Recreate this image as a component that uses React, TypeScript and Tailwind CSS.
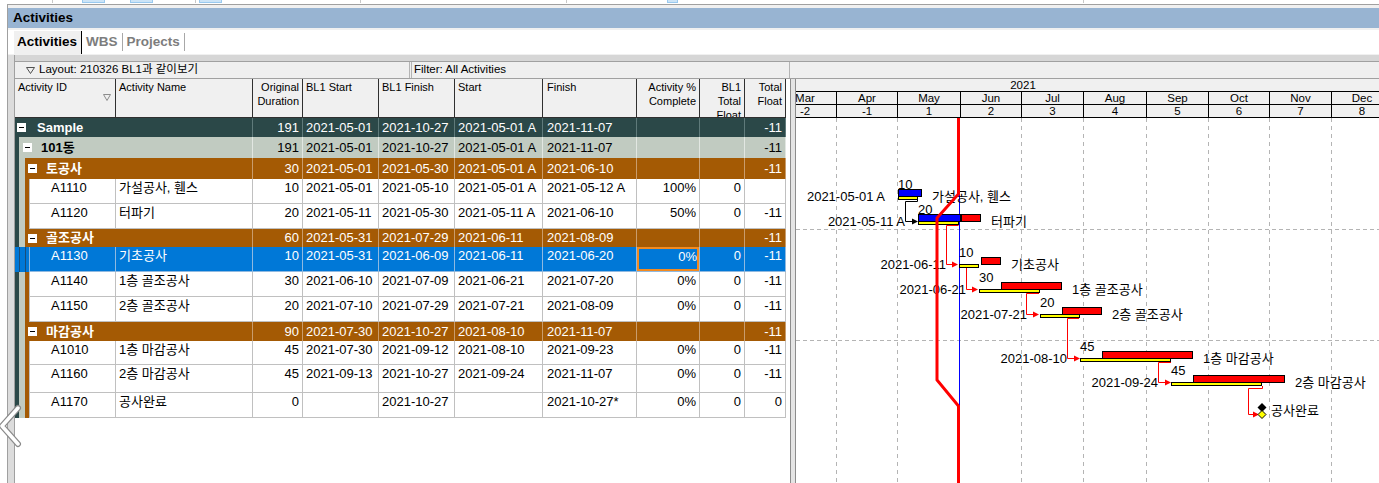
import React from 'react'

type Kind = 'l0' | 'l1' | 'l2' | 'act'

type Row = {
  kind: Kind
  id?: string
  name: string
  dur: string
  bs: string
  bf: string
  st: string
  fi: string
  pct?: string
  btf?: string
  tf: string
  h: string
  sel?: boolean
}

const ROWS: Row[] = [
  { kind: 'l0', name: 'Sample', dur: '191', bs: '2021-05-01', bf: '2021-10-27', st: '2021-05-01 A', fi: '2021-11-07', tf: '-11', h: 'h-[19px]' },
  { kind: 'l1', name: '101동', dur: '191', bs: '2021-05-01', bf: '2021-10-27', st: '2021-05-01 A', fi: '2021-11-07', tf: '-11', h: 'h-[21px]' },
  { kind: 'l2', name: '토공사', dur: '30', bs: '2021-05-01', bf: '2021-05-30', st: '2021-05-01 A', fi: '2021-06-10', tf: '-11', h: 'h-[21px]' },
  { kind: 'act', id: 'A1110', name: '가설공사, 휀스', dur: '10', bs: '2021-05-01', bf: '2021-05-10', st: '2021-05-01 A', fi: '2021-05-12 A', pct: '100%', btf: '0', tf: '', h: 'h-[25px]' },
  { kind: 'act', id: 'A1120', name: '터파기', dur: '20', bs: '2021-05-11', bf: '2021-05-30', st: '2021-05-11 A', fi: '2021-06-10', pct: '50%', btf: '0', tf: '-11', h: 'h-[25px]' },
  { kind: 'l2', name: '골조공사', dur: '60', bs: '2021-05-31', bf: '2021-07-29', st: '2021-06-11', fi: '2021-08-09', tf: '-11', h: 'h-[18px]' },
  { kind: 'act', id: 'A1130', name: '기초공사', dur: '10', bs: '2021-05-31', bf: '2021-06-09', st: '2021-06-11', fi: '2021-06-20', pct: '0%', btf: '0', tf: '-11', h: 'h-[25px]', sel: true },
  { kind: 'act', id: 'A1140', name: '1층 골조공사', dur: '30', bs: '2021-06-10', bf: '2021-07-09', st: '2021-06-21', fi: '2021-07-20', pct: '0%', btf: '0', tf: '-11', h: 'h-[25px]' },
  { kind: 'act', id: 'A1150', name: '2층 골조공사', dur: '20', bs: '2021-07-10', bf: '2021-07-29', st: '2021-07-21', fi: '2021-08-09', pct: '0%', btf: '0', tf: '-11', h: 'h-[25px]' },
  { kind: 'l2', name: '마감공사', dur: '90', bs: '2021-07-30', bf: '2021-10-27', st: '2021-08-10', fi: '2021-11-07', tf: '-11', h: 'h-[19px]' },
  { kind: 'act', id: 'A1010', name: '1층 마감공사', dur: '45', bs: '2021-07-30', bf: '2021-09-12', st: '2021-08-10', fi: '2021-09-23', pct: '0%', btf: '0', tf: '-11', h: 'h-[24px]' },
  { kind: 'act', id: 'A1160', name: '2층 마감공사', dur: '45', bs: '2021-09-13', bf: '2021-10-27', st: '2021-09-24', fi: '2021-11-07', pct: '0%', btf: '0', tf: '-11', h: 'h-[28px]' },
  { kind: 'act', id: 'A1170', name: '공사완료', dur: '0', bs: '', bf: '2021-10-27', st: '', fi: '2021-10-27*', pct: '0%', btf: '0', tf: '0', h: 'h-[25px]' },
]

const COLS: { key: 'dur' | 'bs' | 'bf' | 'st' | 'fi' | 'pct' | 'btf' | 'tf'; w: string; align: string }[] = [
  { key: 'dur', w: 'w-[50px]', align: 'justify-end pr-[3px]' },
  { key: 'bs', w: 'w-[76px]', align: 'pl-[3px]' },
  { key: 'bf', w: 'w-[76px]', align: 'pl-[3px]' },
  { key: 'st', w: 'w-[88px]', align: 'pl-[3px]' },
  { key: 'fi', w: 'w-[94px]', align: 'pl-[4px]' },
  { key: 'pct', w: 'w-[63px]', align: 'justify-end pr-[3px]' },
  { key: 'btf', w: 'w-[45px]', align: 'justify-end pr-[3px]' },
  { key: 'tf', w: 'w-[41px]', align: 'justify-end pr-[3px]' },
]

const STRIPS: Record<Kind, string[]> = {
  l0: [],
  l1: ['w-[4px] bg-[#2b4848]'],
  l2: ['w-[4px] bg-[#2b4848]', 'w-[6px] bg-[#c1cbc1]'],
  act: ['w-[4px] bg-[#2b4848]', 'w-[6px] bg-[#c1cbc1]', 'w-[4px] bg-[#a45a04]'],
}

const SEL_STRIPS = ['w-[4px] bg-[#0078d7]', 'w-[6px] bg-[#0078d7] border-l border-[#1b4d78]', 'w-[4px] bg-[#0078d7] border-l border-[#1b4d78]']

const GROUP = {
  l0: { tone: 'bg-[#2b4848] text-white', line: 'border-[#5f7a7a]', first: 'w-[238px]', box: 'ml-[2px]', name: 'ml-[11px]' },
  l1: { tone: 'bg-[#c1cbc1] text-black', line: 'border-[#e2e7e2]', first: 'w-[234px]', box: 'ml-[4px]', name: 'ml-[9px]' },
  l2: { tone: 'bg-[#a45a04] text-white', line: 'border-[#c99c6c]', first: 'w-[228px]', box: 'ml-[3px]', name: 'ml-[9px]' },
}

function MinusBox({ cls }: { cls: string }) {
  return (
    <span className={`${cls} w-[9px] h-[9px] bg-white flex items-center justify-center shrink-0`}>
      <span className="w-[5px] h-[1px] bg-black" />
    </span>
  )
}

function GroupRow({ r }: { r: Row }) {
  const g = GROUP[r.kind as 'l0' | 'l1' | 'l2']
  return (
    <div className={`flex shrink-0 ${r.h}`}>
      {STRIPS[r.kind].map((s, i) => <div key={i} className={`${s} shrink-0`} />)}
      <div className={`flex ${g.tone}`}>
        <div className={`${g.first} shrink-0 flex items-center border-r ${g.line}`}>
          <MinusBox cls={g.box} />
          <span className={`${g.name} font-bold`}>{r.name}</span>
        </div>
        {COLS.map((c) => (
          <div key={c.key} className={`${c.w} ${c.align} shrink-0 flex items-center border-r ${g.line} whitespace-nowrap`}>
            {r[c.key]}
          </div>
        ))}
      </div>
    </div>
  )
}

function ActRow({ r }: { r: Row }) {
  const sel = !!r.sel
  const tone = sel ? 'bg-[#0078d7] text-white' : 'bg-white text-black'
  const line = sel ? 'border-[#8fb9e0]' : 'border-[#c0c0c0]'
  const strips = sel ? SEL_STRIPS : STRIPS.act
  return (
    <div className={`flex shrink-0 ${r.h}`}>
      {strips.map((s, i) => <div key={i} className={`${s} shrink-0`} />)}
      <div className={`flex ${tone} leading-[16px]`}>
        <div className={`w-[87px] shrink-0 border-l border-r border-b ${line} pl-[21px] pt-[1px]`}>{r.id}</div>
        <div className={`w-[137px] shrink-0 border-r border-b ${line} pl-[3px] pt-[1px] whitespace-nowrap`}>{r.name}</div>
        {COLS.map((c) =>
          sel && c.key === 'pct' ? (
            <div key={c.key} className={`${c.w} shrink-0 border-r border-b ${line}`}>
              <div className="h-full border-2 border-[#f28a20] text-right leading-[16px]">{r.pct}</div>
            </div>
          ) : (
            <div key={c.key} className={`${c.w} ${c.align} shrink-0 flex items-start pt-[1px] border-r border-b ${line} whitespace-nowrap`}>
              {r[c.key]}
            </div>
          )
        )}
      </div>
    </div>
  )
}

function TableHeader() {
  const cell = 'shrink-0 border-r border-[#303030] pt-[1px] overflow-hidden'
  return (
    <div className="flex shrink-0 h-[39px] w-[771px] bg-[#f0f0f0] border-b border-[#303030] text-[11px] leading-[14px] text-black">
      <div className={`w-[101px] ${cell} pl-[3px] flex flex-col`}>
        <span>Activity ID</span>
        <svg className="self-end mr-[4px]" width="8" height="7" viewBox="0 0 8 7">
          <polygon points="0.5,0.5 7.5,0.5 4,6.5" fill="none" stroke="#8c8c8c" />
        </svg>
      </div>
      <div className={`w-[137px] ${cell} pl-[3px]`}>Activity Name</div>
      <div className={`w-[50px] ${cell} pr-[3px] text-right`}>Original<br />Duration</div>
      <div className={`w-[76px] ${cell} pl-[3px]`}>BL1 Start</div>
      <div className={`w-[76px] ${cell} pl-[3px]`}>BL1 Finish</div>
      <div className={`w-[88px] ${cell} pl-[3px]`}>Start</div>
      <div className={`w-[94px] ${cell} pl-[4px]`}>Finish</div>
      <div className={`w-[63px] ${cell} pr-[3px] text-right whitespace-nowrap`}>Activity %<br />Complete</div>
      <div className={`w-[45px] ${cell} pr-[3px] text-right`}>BL1<br />Total<br />Float</div>
      <div className={`w-[41px] ${cell} pr-[3px] text-right`}>Total<br />Float</div>
    </div>
  )
}

const MONTHS = [
  { m: 'Mar', n: '-2', w: 'w-[63px]' },
  { m: 'Apr', n: '-1', w: 'w-[61px]' },
  { m: 'May', n: '1', w: 'w-[63px]' },
  { m: 'Jun', n: '2', w: 'w-[61px]' },
  { m: 'Jul', n: '3', w: 'w-[62px]' },
  { m: 'Aug', n: '4', w: 'w-[63px]' },
  { m: 'Sep', n: '5', w: 'w-[62px]' },
  { m: 'Oct', n: '6', w: 'w-[61px]' },
  { m: 'Nov', n: '7', w: 'w-[62px]' },
  { m: 'Dec', n: '8', w: 'w-[61px]' },
]

function GanttHeader() {
  return (
    <div className="h-[39px] shrink-0 bg-[#f0f0f0] border-b border-black overflow-hidden text-[11.5px] leading-[12px] text-black">
      <div className="h-[13px] border-b border-black overflow-hidden">
        <div className="ml-[-142px] w-[738px] text-center">2021</div>
      </div>
      <div className="flex h-[13px] border-b border-black ml-[-22px] overflow-hidden">
        {MONTHS.map((m) => (
          <div key={m.m} className={`${m.w} shrink-0 border-r border-black text-center`}>{m.m}</div>
        ))}
      </div>
      <div className="flex h-[12px] ml-[-22px] overflow-hidden">
        {MONTHS.map((m) => (
          <div key={m.m} className={`${m.w} shrink-0 border-r border-black text-center`}>{m.n}</div>
        ))}
      </div>
    </div>
  )
}

// day 0 = 2021-04-01
const X = (d: number) => Math.round(837 + d * 2.025)

const BARS = [
  { top: 179, bs: 30, bf: 40, as: 30, af: 42, done: 42, dur: '10', start: '2021-05-01 A', name: '가설공사, 휀스' },
  { top: 204, bs: 40, bf: 60, as: 40, af: 71, done: 61, dur: '20', start: '2021-05-11 A', name: '터파기' },
  { top: 247, bs: 60, bf: 70, as: 71, af: 81, done: 0, dur: '10', start: '2021-06-11', name: '기초공사' },
  { top: 272, bs: 70, bf: 100, as: 81, af: 111, done: 0, dur: '30', start: '2021-06-21', name: '1층 골조공사' },
  { top: 297, bs: 100, bf: 120, as: 111, af: 131, done: 0, dur: '20', start: '2021-07-21', name: '2층 골조공사' },
  { top: 341, bs: 120, bf: 165, as: 131, af: 176, done: 0, dur: '45', start: '2021-08-10', name: '1층 마감공사' },
  { top: 365, bs: 165, bf: 210, as: 176, af: 221, done: 0, dur: '45', start: '2021-09-24', name: '2층 마감공사' },
]

const LINKS = [
  { d: 'M958.5 225.5 H946.5 V264.5 H952', tip: 958, y: 264.5 },
  { d: 'M966.5 268 V289.5 H972', tip: 978, y: 289.5 },
  { d: 'M1039 293.5 H1026.5 V314.5 H1033', tip: 1039, y: 314.5 },
  { d: 'M1079 318.5 H1067.5 V358.5 H1074', tip: 1080, y: 358.5 },
  { d: 'M1171 362.5 H1158.5 V382.5 H1165', tip: 1171, y: 382.5 },
  { d: 'M1262.5 386 V388.5 H1248.5 V414.5 H1253', tip: 1259, y: 414.5 },
]

const arrow = (tip: number, y: number) => `${tip},${y} ${tip - 6},${y - 3} ${tip - 6},${y + 3}`

function Gantt() {
  const font = "'Liberation Sans','Noto Sans CJK KR',sans-serif"
  return (
    <svg width={583} height={365} viewBox="796 118 583 365" className="block shrink-0 bg-white" fontFamily={font} fontSize={13}>
      {[836, 897, 1021, 1083, 1146, 1208, 1269, 1331].map((x) => (
        <line key={x} x1={x + 0.5} y1={118} x2={x + 0.5} y2={483} stroke="#b4b4b4" strokeDasharray="4 4" />
      ))}
      {[229.5, 340.5].map((y) => (
        <line key={y} x1={796} y1={y} x2={1379} y2={y} stroke="#b4b4b4" strokeDasharray="4 3" />
      ))}
      <line x1={959.5} y1={118} x2={959.5} y2={483} stroke="#0000ff" />

      {BARS.map((b) => {
        const T = b.top + 10
        const x0 = X(b.bs)
        const x1 = X(b.bf)
        const a0 = X(b.as)
        const a1 = X(b.af)
        const mid = b.done > b.as ? X(Math.min(b.done, b.af)) : a0
        return (
          <g key={b.name}>
            <rect x={x0 + 0.5} y={T + 7.5} width={x1 - x0 - 1} height={3} fill="#ffff00" stroke="#000" />
            {mid > a0 && <rect x={a0 + 0.5} y={T + 0.5} width={mid - a0 - 1} height={7} fill="#0000ff" stroke="#000" />}
            {a1 > mid && <rect x={mid + 0.5} y={T + 0.5} width={a1 - mid - 1} height={7} fill="#ff0000" stroke="#000" />}
            <text x={x0} y={T}>{b.dur}</text>
            <text x={x0 - 13} y={T + 12} textAnchor="end">{b.start}</text>
            <text x={a1 + 10} y={T + 12}>{b.name}</text>
          </g>
        )
      })}

      <path d="M917.5 199 V201.5 H905.5 V221.5 H912" fill="none" stroke="#000" />
      <polygon points={arrow(918, 221.5)} fill="#000" />
      {LINKS.map((l) => (
        <g key={l.d}>
          <path d={l.d} fill="none" stroke="#ff0000" />
          <polygon points={arrow(l.tip, l.y)} fill="#ff0000" />
        </g>
      ))}

      <polygon points="1262,403 1266.5,407.5 1262,412 1257.5,407.5" fill="#000" />
      <polygon points="1262,410.5 1266,414.5 1262,418.5 1258,414.5" fill="#ffff00" stroke="#000" />
      <text x={1271} y={415}>공사완료</text>

      <path d="M958.5 118 V194 L937 218 V380 L958.5 406 V483" fill="none" stroke="#ff0000" strokeWidth={3} />
    </svg>
  )
}

export default function App() {
  return (
    <div className="w-[1379px] h-[483px] overflow-hidden bg-white relative font-['Liberation_Sans','Noto_Sans_CJK_KR',sans-serif] text-[13px] text-black">
      {/* toolbar remnant */}
      <div className="h-[4px] flex items-start">
        <div className="ml-[52px] w-[1px] h-[3px] bg-[#c8c8c8]" />
        <div className="ml-[29px] w-[23px] h-[3px] bg-[#cce4f7] border-x border-b border-[#99c9ef]" />
        <div className="ml-[25px] w-[23px] h-[3px] bg-[#cce4f7] border-x border-b border-[#99c9ef]" />
        <div className="ml-[42px] w-[1px] h-[3px] bg-[#c8c8c8]" />
        <div className="ml-[3px] w-[23px] h-[3px] bg-[#cce4f7] border-x border-b border-[#99c9ef]" />
        <div className="ml-[138px] w-[1px] h-[3px] bg-[#c8c8c8]" />
        <div className="ml-[205px] w-[1px] h-[3px] bg-[#c8c8c8]" />
        <div className="ml-[100px] w-[11px] h-[3px] bg-[#cce4f7] border-x border-b border-[#99c9ef]" />
        <div className="ml-[405px] w-[1px] h-[3px] bg-[#c8c8c8]" />
      </div>
      <div className="h-[1px] ml-[7px] bg-[#a0a0a0]" />

      <div className="flex h-[478px]">
        <div className="w-[8px] shrink-0 border-r border-[#a0a0a0] bg-white" />
        <div className="flex-1 min-w-0 flex flex-col bg-[#f0f0f0]">
          <div className="h-[3px] shrink-0" />
          <div className="h-[20px] shrink-0 bg-[#98b4d2] flex items-center pl-[5px] text-[13.5px] font-bold">Activities</div>
          <div className="h-[2px] shrink-0" />
          <div className="h-[24px] shrink-0 bg-white flex pl-[6px] text-[13.5px] font-bold">
            <div className="w-[68px] shrink-0 mt-[1px] bg-[#f0f0f0] border-r border-black pl-[3px] flex items-center">Activities</div>
            <div className="px-[4px] flex items-center text-[#7d7d7d]">WBS</div>
            <div className="w-[1px] h-[18px] self-center bg-[#a8a8a8]" />
            <div className="px-[4px] flex items-center text-[#7d7d7d]">Projects</div>
            <div className="w-[1px] h-[18px] self-center bg-[#a8a8a8]" />
          </div>
          <div className="h-[1px] shrink-0" />

          <div className="flex-1 min-h-0 flex">
            <div className="w-[7px] shrink-0 bg-[#dcdcdc] border-r border-[#a0a0a0]" />
            <div className="flex-1 min-w-0 flex flex-col">
              <div className="h-[7px] shrink-0 bg-[#d6d6d6] border-b border-[#a0a0a0]" />
              <div className="h-[17px] shrink-0 bg-[#efefef] border-b border-[#a0a0a0] flex text-[11.5px]">
                <div className="w-[395px] shrink-0 border-r border-[#b4b4b4] flex items-center">
                  <svg className="ml-[11px]" width="9" height="7" viewBox="0 0 9 7">
                    <polygon points="0.5,0.5 8.5,0.5 4.5,6.5" fill="none" stroke="#505050" />
                  </svg>
                  <span className="ml-[4px]">Layout: 210326 BL1과 같이보기</span>
                </div>
                <div className="w-[1px] shrink-0" />
                <div className="w-[379px] shrink-0 border-x border-[#b4b4b4] flex items-center pl-[2px]">Filter: All Activities</div>
              </div>

              <div className="flex-1 min-h-0 flex">
                <div className="w-[775px] shrink-0 bg-white flex flex-col">
                  <TableHeader />
                  {ROWS.map((r, i) => (r.kind === 'act' ? <ActRow key={i} r={r} /> : <GroupRow key={i} r={r} />))}
                </div>
                <div className="w-[6px] shrink-0 bg-[#e4e4e4] border-x border-[#8c8c8c]" />
                <div className="flex-1 min-w-0 flex flex-col bg-white overflow-hidden">
                  <GanttHeader />
                  <Gantt />
                </div>
              </div>
            </div>
          </div>
        </div>
      </div>

      {/* viewer back chevron */}
      <svg className="absolute left-0 top-[404px]" width="22" height="46" viewBox="0 0 22 46">
        <polyline points="18,4 2,22 18,40" fill="none" stroke="#8a8a8a" strokeWidth="6" strokeLinecap="round" strokeLinejoin="round" />
        <polyline points="18,4 2,22 18,40" fill="none" stroke="#ffffff" strokeWidth="3.5" strokeLinecap="round" strokeLinejoin="round" />
      </svg>
    </div>
  )
}
